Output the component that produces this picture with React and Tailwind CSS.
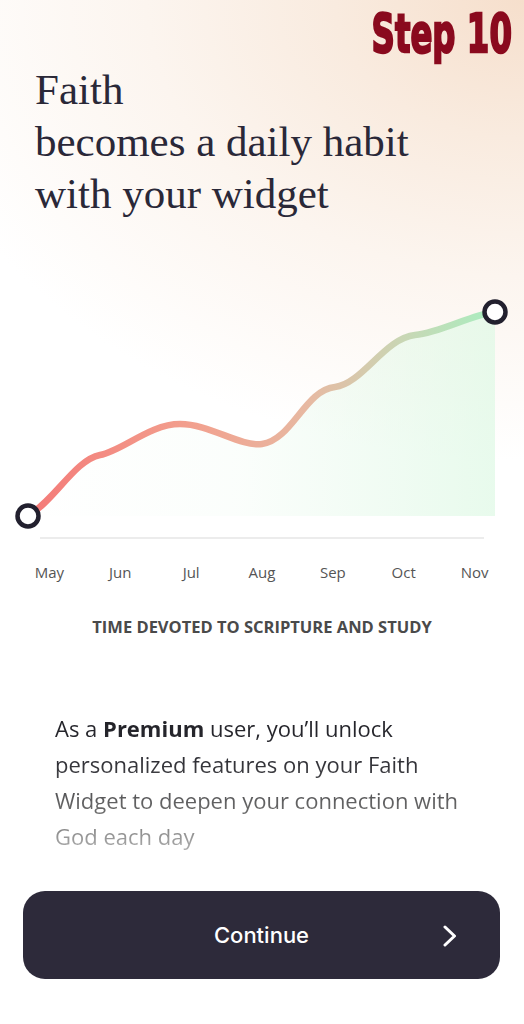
import React from 'react'

const months = ['May', 'Jun', 'Jul', 'Aug', 'Sep', 'Oct', 'Nov']

const curve =
    'M28 226 C 55 210, 75 170, 100 165 C 122 161, 150 134, 180 134 C 210 134, 240 157, 262 154 C 292 150, 305 100, 335 97 C 362 94, 385 48, 415 45 C 442 42, 470 25, 495 22'

const Chart = () => {
    return (
        <svg width="524" height="260" viewBox="0 0 524 260" className="block">
            <defs>
                <linearGradient id="line" x1="0" y1="0" x2="1" y2="0">
                    <stop offset="0%" stopColor="#f47a78" />
                    <stop offset="35%" stopColor="#f2a08e" />
                    <stop offset="60%" stopColor="#e7b9a2" />
                    <stop offset="80%" stopColor="#c9d6b4" />
                    <stop offset="100%" stopColor="#a9eec0" />
                </linearGradient>
                <linearGradient id="area" x1="0" y1="0" x2="1" y2="0">
                    <stop offset="0%" stopColor="#e3f8e8" stopOpacity="0" />
                    <stop offset="45%" stopColor="#e3f8e8" stopOpacity="0.15" />
                    <stop offset="100%" stopColor="#e0f9e6" stopOpacity="0.75" />
                </linearGradient>
            </defs>
            <path d={curve + ' L495 226 L28 226 Z'} fill="url(#area)" />
            <line x1="40" y1="248" x2="484" y2="248" stroke="#e6e6e6" strokeWidth="1.5" />
            <path d={curve} fill="none" stroke="url(#line)" strokeWidth="6.5" strokeLinecap="round" />
            <circle cx="28" cy="226" r="10.5" fill="#fff" stroke="#22202e" strokeWidth="4.5" />
            <circle cx="495" cy="22" r="10.5" fill="#fff" stroke="#22202e" strokeWidth="4.5" />
        </svg>
    )
}

const App = () => {
    return (
        <div className="relative w-[524px] h-[1024px] overflow-hidden bg-white bg-[radial-gradient(ellipse_120%_45%_at_100%_0%,#f6dfcc_0%,#f9ebdf_30%,#fcf5ef_60%,#ffffff_100%)]">
            <div className="absolute right-[12px] top-[4px] origin-right scale-x-[0.6] text-[54px] leading-[60px] font-bold text-[#8a0a1e] whitespace-nowrap [-webkit-text-stroke:2.5px_#8a0a1e] [font-family:'DejaVu_Sans',sans-serif]">
                Step 10
            </div>

            <h1 className="pt-[64px] pl-[35px] text-[43px] leading-[52px] font-normal text-[#2a2838] [font-family:'Liberation_Serif',serif]">
                Faith
                <br />
                becomes a daily habit
                <br />
                with your widget
            </h1>

            <div className="mt-[70px]">
                <Chart />
            </div>

            <div className="mt-[12px] ml-[14px] w-[496px] grid grid-cols-7 text-center text-[15px] leading-[20px] text-[#555] [font-family:'Open_Sans',sans-serif]">
                {months.map((m) => {
                    return <span key={m}>{m}</span>
                })}
            </div>

            <p className="mt-[34px] text-center text-[16.5px] leading-[22px] font-bold text-[#4a4a4a] [font-family:'Open_Sans',sans-serif]">
                TIME DEVOTED TO SCRIPTURE AND STUDY
            </p>

            <p className="mt-[72px] ml-[55px] w-[460px] text-[22px] leading-[36px] bg-[linear-gradient(180deg,#1e1e24_0%,#2e2e34_35%,#6a6a6a_70%,#b4b4b4_100%)] bg-clip-text text-transparent [font-family:'Open_Sans',sans-serif]">
                As a <b className="font-bold">Premium</b> user, you’ll unlock
                <br />
                personalized features on your Faith
                <br />
                Widget to deepen your connection with
                <br />
                God each day
            </p>

            <button className="mt-[37px] ml-[23px] w-[477px] h-[88px] rounded-[22px] bg-[#2d2a3a] flex items-center justify-center relative text-white text-[22px] font-medium [font-family:Inter,sans-serif]">
                Continue
                <svg className="absolute right-[42px] top-[34px]" width="16" height="22" viewBox="0 0 16 22" fill="none">
                    <path d="M3 2 L12.5 11 L3 20" stroke="#fff" strokeWidth="3" strokeLinecap="round" strokeLinejoin="round" />
                </svg>
            </button>
        </div>
    )
}

export default App
